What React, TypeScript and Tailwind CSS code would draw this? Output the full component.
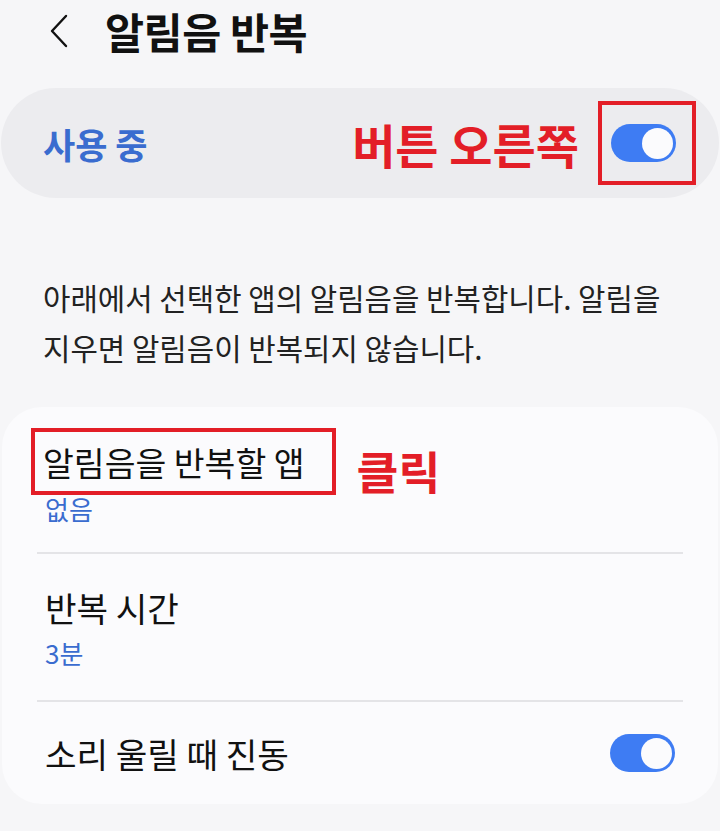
import React from 'react';

const font = { fontFamily: '"Noto Sans CJK KR", "Noto Sans", sans-serif' };

const Toggle: React.FC = () => (
  <div className="flex h-[38px] w-[65px] items-center justify-end rounded-full bg-[#3e7cf3] pr-[3px]">
    <div className="h-[31px] w-[31px] rounded-full bg-[#fbfbfd]" />
  </div>
);

const App: React.FC = () => {
  return (
    <div className="h-[831px] w-[720px] overflow-hidden bg-[#f6f6f8] text-[#111]" style={font}>
      {/* header */}
      <div className="flex h-[62px] items-center pl-[48px]">
        <svg width="22" height="34" viewBox="0 0 22 34" fill="none">
          <path d="M18 2 L4 17 L18 32" stroke="#111" strokeWidth="2.4" strokeLinecap="round" strokeLinejoin="round" />
        </svg>
        <h1 className="ml-[35px] text-[42.5px] font-bold leading-none tracking-[-0.5px]">알림음 반복</h1>
      </div>

      {/* master switch */}
      <div className="mx-[1px] mt-[26px] flex h-[110px] items-center rounded-full bg-[#ececef] pl-[42px] pr-[23px]">
        <span className="flex-1 text-[35px] font-bold leading-none text-[#3a6ccf]">사용 중</span>
        <span className="mr-[19px] text-[47px] font-bold leading-none text-[#e31e27]">버튼 오른쪽</span>
        <div className="flex h-[84px] w-[98px] items-center border-4 border-[#e31e27] pl-[9px]">
          <Toggle />
        </div>
      </div>

      {/* description */}
      <p className="mt-[74px] whitespace-nowrap px-[43px] text-[29.8px] leading-[50px] text-[#222]">
        아래에서 선택한 앱의 알림음을 반복합니다. 알림을
        <br />
        지우면 알림음이 반복되지 않습니다.
      </p>

      {/* settings list */}
      <div className="mx-[2px] mt-[35px] rounded-[40px] bg-[#fbfbfd] px-[35px]">
        <div className="pt-[21px] pb-[29px]">
          <div className="flex items-center">
            <div className="ml-[-6px] flex h-[67px] items-center border-4 border-[#e31e27] pl-[8px] pr-[27px]">
              <span className="text-[33.5px] leading-none">알림음을 반복할 앱</span>
            </div>
            <span className="ml-[21px] mt-[18px] text-[45.5px] font-bold leading-none text-[#e31e27]">클릭</span>
          </div>
          <div className="pl-[8px] text-[26px] leading-[28px] text-[#3a6ccf]">없음</div>
        </div>
        <div className="h-[2px] bg-[#e4e4e7]" />
        <div className="pt-[33px] pb-[32px] pl-[8px]">
          <div className="text-[34.3px] leading-[40px]">반복 시간</div>
          <div className="mt-[11px] text-[26px] leading-[30px] text-[#3a6ccf]">3분</div>
        </div>
        <div className="h-[2px] bg-[#e4e4e7]" />
        <div className="flex items-center justify-between pt-[31px] pb-[31px] pl-[8px] pr-[8px]">
          <span className="text-[34.3px] leading-[40px]">소리 울릴 때 진동</span>
          <Toggle />
        </div>
      </div>
    </div>
  );
};

export default App;
